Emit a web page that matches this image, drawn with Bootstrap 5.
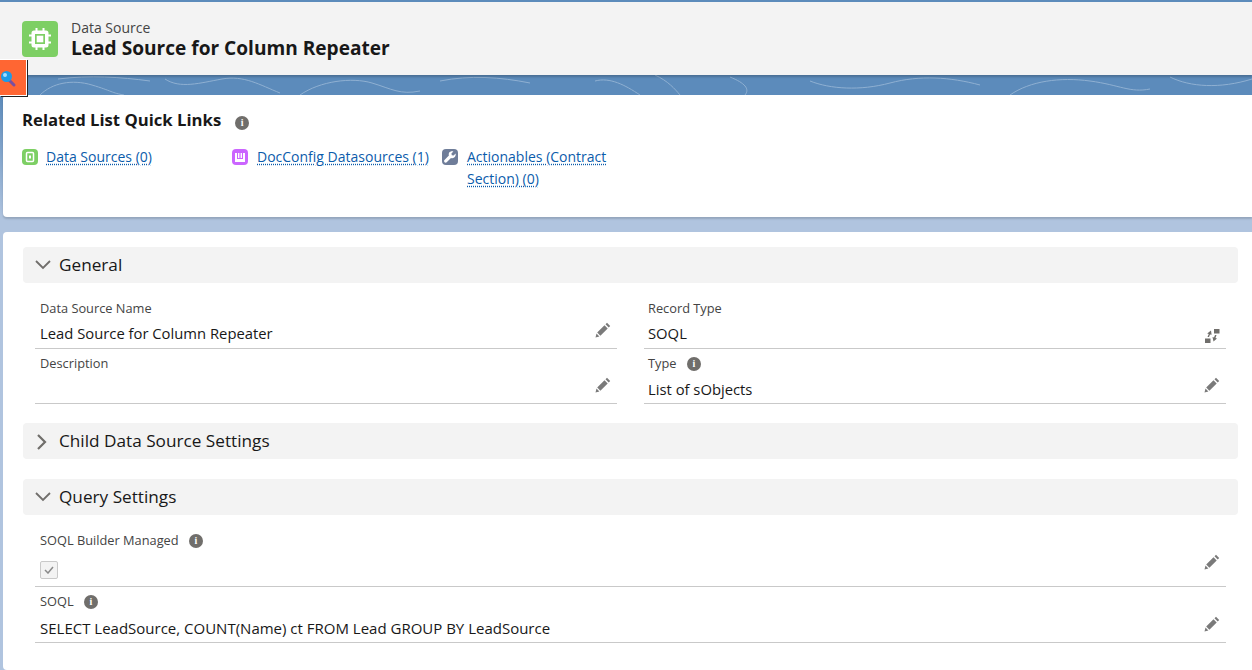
<!DOCTYPE html>
<html lang="en">
<head>
    <meta charset="UTF-8">
    <meta name="viewport" content="width=device-width, initial-scale=1.0">
    <title>Lead Source for Column Repeater - Data Source</title>
    <link href="https://cdn.jsdelivr.net/npm/bootstrap@5.3.0/dist/css/bootstrap.min.css" rel="stylesheet">
    <style>
        html, body {
            height: 670px;
            overflow: hidden;
        }

        body {
            background: linear-gradient(#5c8bbb 95px, #b0c4df 220px);
            font-family: "Open Sans", "Liberation Sans", sans-serif;
            color: #181818;
            font-size: 14.8px;
            position: relative;
        }

        /* Header */
        .band {
            background-color: #5c8bbb;
            height: 95px;
            padding-top: 2px;
            position: relative;
            overflow: hidden;
        }

        .contours {
            position: absolute;
            left: 0;
            top: 75px;
        }

        .page-head {
            background: #f3f3f3;
            height: 73px;
            padding-left: 22px;
            box-shadow: 0 2px 2px rgba(0, 0, 0, 0.2);
            position: relative;
        }

        .head-icon {
            width: 36px;
            height: 36px;
            background: #7dcf64;
            border-radius: 4px;
            margin-right: 13px;
        }

        .head-sub {
            font-size: 14px;
            line-height: 18px;
            color: #444;
        }

        .head-title {
            font-size: 19.1px;
            line-height: 22px;
            font-weight: 700;
        }

        .finder-tab {
            position: absolute;
            left: 0;
            top: 59px;
            width: 27px;
            height: 37px;
            background: #ff6633;
            border: 1px solid #fff;
            border-left: 0;
            box-shadow: 1px 1px 0 #222;
            z-index: 5;
        }

        .finder-tab svg {
            margin-top: 10px;
        }

        /* Panels */
        .panel-links {
            background: #fff;
            margin-left: 3px;
            height: 122px;
            border-radius: 4px 0 0 4px;
            box-shadow: 0 2px 2px rgba(0, 0, 0, 0.15);
            padding: 14px 19px;
        }

        .links-title {
            font-size: 16.7px;
            line-height: 22px;
            font-weight: 700;
            margin-right: 7px;
        }

        .links-info {
            margin-left: 0;
            margin-top: 6px;
        }

        .quick-links {
            margin-top: 15px;
            display: flex;
            font-size: 14px;
        }

        .quick-item {
            display: flex;
            align-items: flex-start;
            line-height: 22px;
            width: 210px;
        }

        .quick-item a {
            color: #0b5cab;
            text-decoration: underline dotted;
            text-underline-offset: 2px;
        }

        .quick-item.narrow {
            width: 175px;
        }

        .qi-icon {
            width: 16px;
            height: 16px;
            border-radius: 4px;
            margin-top: 3px;
            margin-right: 9px;
            flex: none;
        }

        .qi-green { background: #7dcf64; margin-right: 8px; }
        .qi-purple { background: #cb65ff; }
        .qi-slate { background: #6f7d99; }

        .panel-details {
            background: #fff;
            margin-top: 15px;
            margin-left: 3px;
            height: 438px;
            border-radius: 4px 0 0 4px;
            padding: 15px 14px 0 20px;
        }

        .sec-bar {
            background: #f3f3f3;
            height: 36px;
            border-radius: 4px;
            font-size: 17.2px;
            line-height: 36px;
            padding-left: 12px;
        }

        .sec-bar svg {
            margin-right: 8px;
            flex: none;
        }

        .sec-bar svg.chev-right {
            margin-top: 2px;
        }

        .sec-gap {
            margin-top: 20px;
        }

        .fields {
            display: grid;
            grid-template-columns: 582px 582px;
            column-gap: 27px;
            margin: 8px 12px -1px 12px;
        }

        .fields-wide {
            margin: 0 12px;
        }

        .fld {
            border-bottom: 1px solid #c9c9c9;
            padding: 0 5px;
            height: 58px;
            position: relative;
        }

        .fld.col-right {
            padding-left: 4px;
        }

        .fld.row-next {
            height: 55px;
        }

        .fld.row-soql {
            height: 56px;
        }

        .fld.row-check {
            height: 72px;
        }

        .fld-label {
            font-size: 12.8px;
            line-height: 18px;
            padding-top: 8px;
            height: 26px;
            color: #444;
        }

        .row-next .fld-label,
        .row-soql .fld-label {
            padding-top: 5px;
            height: 23px;
        }

        .row-check .fld-label {
            padding-top: 16px;
            height: 34px;
        }

        .fld-value {
            line-height: 20px;
            padding-top: 6px;
        }

        .row-next .fld-value {
            padding-top: 7px;
        }

        .row-soql .fld-value {
            padding-top: 8px;
            font-size: 15px;
        }

        .fld-edit {
            position: absolute;
            right: 6px;
            bottom: 10px;
            fill: #7a7a7a;
        }

        .row-check .fld-edit {
            bottom: 16px;
        }

        .fld-edit.swap {
            bottom: 4px;
            fill: #706e6b;
        }

        .info-dot {
            width: 14px;
            height: 14px;
            border-radius: 50%;
            background: #706e6b;
            color: #fff;
            font: 700 10px/14px "Liberation Serif", serif;
            text-align: center;
            display: inline-block;
            margin-left: 7px;
            vertical-align: 1px;
        }

        .fake-check {
            width: 18px;
            height: 18px;
            border: 1px solid #c9c9c9;
            border-radius: 2px;
            background: #f3f3f3;
            margin-top: 12px;
        }
    </style>
</head>
<body>

    <svg width="0" height="0" class="d-block">
        <symbol id="pencil" viewBox="0 0 16 16">
            <path d="M12 .8l3.200 3.200-1.500 1.500-3.200-3.200zM9.500 3.300l3.200 3.200-7.300 7.300-3.200-3.200zM1.500 11.600l2.900 2.900-3.900 1z"/>
        </symbol>
    </svg>

    <!-- Header -->
    <div class="band">
        <svg class="contours" width="1252" height="20" fill="none" stroke="#8fb0d2" stroke-width="1">
            <path d="M40 20C52 8 72 4 92 10S112 18 124 20"/>
            <path d="M58 4C90 0 120 2 150 6"/>
            <path d="M165 4C180 14 200 8 222 4S260 10 280 18"/>
            <path d="M300 20C320 6 352 2 372 8S400 20 420 16"/>
            <path d="M440 6C470 0 500 2 530 8"/>
            <path d="M595 6C610 2 625 10 640 20"/>
            <path d="M655 0C668 6 675 14 680 20"/>
            <path d="M730 2C745 8 750 14 745 20"/>
            <path d="M810 6C830 14 860 16 890 8S950 2 980 10"/>
            <path d="M1010 20C1030 6 1060 2 1090 6S1130 18 1150 14"/>
            <path d="M1170 2C1190 12 1220 14 1252 4"/>
        </svg>
        <div class="page-head d-flex align-items-center">
            <div class="head-icon d-flex align-items-center justify-content-center">
                <svg width="22" height="22" viewBox="0 0 22 22" fill="#fff">
                    <path d="M5 2.500h12a2.500 2.500 0 0 1 2.500 2.500v12a2.500 2.500 0 0 1-2.500 2.500H5A2.500 2.500 0 0 1 2.500 17V5A2.500 2.500 0 0 1 5 2.500zM6 6v10h10V6z" fill-rule="evenodd"/>
                    <rect x="7.700" y="7.700" width="6.600" height="6.600"/>
                    <path d="M6.500 0h2v3h-2zM13.500 0h2v3h-2zM6.500 19h2v3h-2zM13.500 19h2v3h-2zM0 6.500h3v2H0zM0 13.500h3v2H0zM19 6.500h3v2h-3zM19 13.500h3v2h-3z"/>
                </svg>
            </div>
            <div>
                <div class="head-sub">Data Source</div>
                <div class="head-title">Lead Source for Column Repeater</div>
            </div>
        </div>
    </div>

    <!-- Orange finder tab -->
    <div class="finder-tab">
        <svg width="18" height="18" viewBox="0 0 18 18" class="d-block">
            <path d="M8 9l6 6" stroke="#7a4fa0" stroke-width="3" stroke-linecap="round"/>
            <circle cx="6.500" cy="6.500" r="5.500" fill="#1e9be8"/>
            <circle cx="5" cy="5" r="2" fill="#a5dcff"/>
        </svg>
    </div>

    <!-- Quick links -->
    <div class="panel-links">
        <div class="d-flex align-items-center">
            <span class="links-title">Related List Quick Links</span>
            <span class="info-dot links-info">i</span>
        </div>
        <div class="quick-links">
            <div class="quick-item">
                <span class="qi-icon qi-green d-flex align-items-center justify-content-center">
                    <svg width="10" height="12" viewBox="0 0 10 12" fill="none" stroke="#fff" stroke-width="1.500"><rect x="1.500" y="1.500" width="7" height="9" rx="1"/><rect x="4" y="4.500" width="2" height="3" fill="#fff" stroke="none"/></svg>
                </span>
                <a href="#">Data Sources (0)</a>
            </div>
            <div class="quick-item">
                <span class="qi-icon qi-purple d-flex align-items-center justify-content-center">
                    <svg width="10" height="10" viewBox="0 0 10 10" fill="#fff"><path d="M0 1h2v6h6V1h2v9H0z"/><rect x="3" y="1" width="1.400" height="5"/><rect x="5.600" y="1" width="1.400" height="5"/></svg>
                </span>
                <a href="#">DocConfig Datasources (1)</a>
            </div>
            <div class="quick-item narrow">
                <span class="qi-icon qi-slate d-flex align-items-center justify-content-center">
                    <svg width="12" height="12" viewBox="0 0 12 12" fill="#fff"><path d="M11.600 2.600 9.600 4.600 7.800 4.200 7.400 2.400 9.400.4C7.800-.2 6 .3 5.200 1.600 4.600 2.600 4.600 3.600 4.900 4.600L.5 9c-.6.6-.6 1.600 0 2.200s1.600.6 2.200 0L7 6.900c1 .4 2.200.3 3.100-.4 1.300-.9 1.900-2.600 1.500-3.900z"/></svg>
                </span>
                <a href="#">Actionables (Contract Section) (0)</a>
            </div>
        </div>
    </div>

    <!-- Details -->
    <div class="panel-details">
        <div class="sec-bar d-flex align-items-center">
            <svg width="16" height="10" viewBox="0 0 16 10" fill="none" stroke="#706e6b" stroke-width="1.800"><path d="M1 1l7 7 7-7"/></svg>
            General
        </div>
        <div class="fields">
            <div class="fld">
                <div class="fld-label">Data Source Name</div>
                <div class="fld-value">Lead Source for Column Repeater</div>
                <svg class="fld-edit" width="16" height="16"><use href="#pencil"/></svg>
            </div>
            <div class="fld col-right">
                <div class="fld-label">Record Type</div>
                <div class="fld-value">SOQL</div>
                <svg class="fld-edit swap" width="16" height="16" viewBox="0 0 16 16"><rect x="10" y="1" width="5.500" height="4.500"/><rect x="1" y="10.500" width="5.500" height="4.500"/><path d="M7 2.500 3.200 5.500 4.800 6 3.500 9h1.500l1-2.600 1.600.4zM9.500 13.500 13 10.500 11.500 10l1-3H11l-1 2.500L8.500 9z"/></svg>
            </div>
            <div class="fld row-next">
                <div class="fld-label">Description</div>
                <div class="fld-value">&nbsp;</div>
                <svg class="fld-edit" width="16" height="16"><use href="#pencil"/></svg>
            </div>
            <div class="fld row-next col-right">
                <div class="fld-label">Type <span class="info-dot">i</span></div>
                <div class="fld-value">List of sObjects</div>
                <svg class="fld-edit" width="16" height="16"><use href="#pencil"/></svg>
            </div>
        </div>

        <div class="sec-bar sec-gap d-flex align-items-center">
            <svg class="chev-right" width="16" height="16" viewBox="0 0 16 16" fill="none" stroke="#706e6b" stroke-width="2.200"><path d="M3 1l7 7-7 7"/></svg>
            Child Data Source Settings
        </div>

        <div class="sec-bar sec-gap d-flex align-items-center">
            <svg width="16" height="10" viewBox="0 0 16 10" fill="none" stroke="#706e6b" stroke-width="1.800"><path d="M1 1l7 7 7-7"/></svg>
            Query Settings
        </div>
        <div class="fields-wide">
            <div class="fld row-check">
                <div class="fld-label">SOQL Builder Managed <span class="info-dot">i</span></div>
                <div class="fake-check d-flex align-items-center justify-content-center">
                    <svg width="10" height="8" viewBox="0 0 10 8" fill="none" stroke="#8a8a8a" stroke-width="1.500"><path d="M1 4l3 3 5-6"/></svg>
                </div>
                <svg class="fld-edit" width="16" height="16"><use href="#pencil"/></svg>
            </div>
            <div class="fld row-soql">
                <div class="fld-label">SOQL <span class="info-dot">i</span></div>
                <div class="fld-value">SELECT LeadSource, COUNT(Name) ct FROM Lead GROUP BY LeadSource</div>
                <svg class="fld-edit" width="16" height="16"><use href="#pencil"/></svg>
            </div>
        </div>
    </div>

    <script src="https://cdn.jsdelivr.net/npm/bootstrap@5.3.0/dist/js/bootstrap.bundle.min.js"></script>
</body>
</html>
